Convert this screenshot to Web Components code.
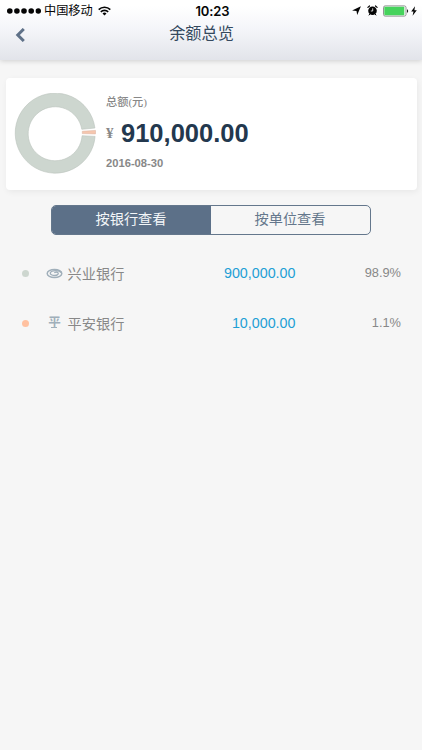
<!DOCTYPE html>
<html lang="zh-CN">
<head>
<meta charset="utf-8">
<meta name="viewport" content="width=device-width, initial-scale=1">
<title>余额总览</title>
<style>
  html, body {
    margin: 0;
    height: 100%;
    background: #f6f6f6;
    overflow: hidden;
  }

  body {
    font-family: "Liberation Sans", "Noto Sans CJK SC", sans-serif;
    color: #888;
  }
</style>
</head>
<body>
<balance-page></balance-page>

<script>
// ─── Status bar ─────────────────────────────────────────────────────────────
class StatusBar extends HTMLElement {
  constructor() {
    super();
    this.attachShadow({ mode: 'open' });
  }

  connectedCallback() {
    this.shadowRoot.innerHTML = `
      <style>
        :host {
          display: grid;
          grid-template-columns: 1fr auto 1fr;
          align-items: center;
          box-sizing: border-box;
          height: 21px;
          padding: 0 5px 0 7px;
          color: #050505;
          font-size: 12px;
          line-height: 20px;
        }

        svg { display: block; }
        .left, .right { display: flex; align-items: center; }
        .carrier { margin: 0 5px 0 3px; font-size: 12.2px; }
        .time {
          padding-left: 1px;
          font: 600 13px/20px Inter, sans-serif;
          letter-spacing: -0.1px;
        }
        .right { justify-content: flex-end; }
        .alarm { margin: 0 5px 0 6px; }
        .bolt { margin-left: 2px; }
      </style>

      <div class="left">
        <svg width="34" height="8" viewBox="0 0 34 8" fill="currentColor">
          <circle cx="2.8" cy="4" r="2.8"/><circle cx="9.9" cy="4" r="2.8"/>
          <circle cx="17" cy="4" r="2.8"/><circle cx="24.2" cy="4" r="2.8"/>
          <circle cx="31.3" cy="4" r="2.7"/>
        </svg>
        <span class="carrier">${this.getAttribute('carrier')}</span>
        <svg width="13" height="10" viewBox="0 0 13 10" fill="none" stroke="currentColor" stroke-width="1.6">
          <path d="M.7 3.6a8.3 8.3 0 0 1 11.6 0M2.8 5.9a5.3 5.3 0 0 1 7.4 0"/>
          <path d="M4.5 7.4a2.9 2.9 0 0 1 4 0L6.5 9.6z" fill="currentColor" stroke="none"/>
        </svg>
      </div>
      <span class="time">${this.getAttribute('time')}</span>
      <div class="right">
        <svg width="9" height="9" viewBox="0 0 9 9" fill="currentColor"><path d="M8.9.2 5.2 8.900 4.500 4.900.1 4.400z"/></svg>
        <svg class="alarm" width="11" height="11" viewBox="0 0 11 11">
          <g fill="none" stroke="currentColor" stroke-linecap="round">
            <path d="M.9 2.4 2.5 1M10.1 2.4 8.5 1" stroke-width="1.2"/>
            <path d="m2.7 9.2-.6.8M8.3 9.2l.6.8"/>
          </g>
          <circle cx="5.5" cy="5.7" r="4.3" fill="currentColor"/>
          <path d="M5.7 3.3V6H3.8" fill="none" stroke="#fff" stroke-width=".8"/>
        </svg>
        <svg width="26" height="12" viewBox="0 0 26 12">
          <rect x=".5" y=".9" width="22.5" height="10.2" rx="1.7" fill="#fff" stroke="#777" stroke-width=".8"/>
          <rect x="1.3" y="1.7" width="20" height="8.6" rx=".8" fill="#46d35c"/>
          <path d="M24 4.200c1.500.3 1.500 3.300 0 3.600z" fill="#222"/>
        </svg>
        <svg class="bolt" width="6" height="10" viewBox="0 0 6 10" fill="currentColor"><path d="M4 .2.2 5.5h2.300L1.600 9.800 5.800 4.200H3.400z"/></svg>
      </div>
    `;
  }
}

// ─── Navigation bar with back chevron ───────────────────────────────────────
class NavBar extends HTMLElement {
  constructor() {
    super();
    this.attachShadow({ mode: 'open' });
    this.shadowRoot.innerHTML = `
      <style>
        :host {
          display: grid;
          grid-template-columns: 50px 1fr 70px;
          height: 39px;
          color: #34495e;
        }

        button {
          display: flex;
          padding: 7px 0 0 15px;
          border: 0;
          background: none;
        }

        h1 {
          margin: 0;
          padding-left: 1px;
          font-size: 16.2px;
          font-weight: 400;
          line-height: 24px;
          text-align: center;
        }
      </style>

      <button aria-label="返回">
        <svg width="10" height="14" viewBox="0 0 10 14" fill="none" stroke="#5f7188" stroke-width="3"><path d="M8.8 1 2.8 7l6 6"/></svg>
      </button>
      <h1><slot></slot></h1>
    `;
  }
}

// ─── Donut chart: one wide ring segment and one small detached slice ────────
class ShareDonut extends HTMLElement {
  constructor() {
    super();
    this.attachShadow({ mode: 'open' });
    this.shadowRoot.innerHTML = `
      <style>
        :host { display: block; width: 82px; height: 82px; }
        svg { display: block; }
      </style>

      <svg width="82" height="82" viewBox="0 0 82 82" stroke-width=".6">
        <path d="M80.9 35A40 40 0 1 0 81.1 43.400L68.100 42.700A27 27 0 1 1 67.800 36.300Z" fill="#cdd6cf" stroke="#bac2bc"/>
        <path d="M68.300 38.300 81.500 37.400v3.500L68.300 40.600z" fill="#f6c6ae" stroke="#dfb7a5"/>
      </svg>
    `;
  }
}

// ─── Total card ─────────────────────────────────────────────────────────────
class TotalCard extends HTMLElement {
  constructor() {
    super();
    this.attachShadow({ mode: 'open' });
  }

  connectedCallback() {
    this.shadowRoot.innerHTML = `
      <style>
        :host {
          display: flex;
          box-sizing: border-box;
          height: 112px;
          margin: 0 5px 0 6px;
          padding: 15px 8px 0;
          border-radius: 4px;
          background: #fff;
          box-shadow: 1px 2px 6px rgba(0, 0, 0, .06);
        }

        .info { padding-left: 10px; }
        p { margin: 0; }
        .label {
          font: 500 11.2px/19px "Liberation Serif", "Noto Sans CJK SC", serif;
        }
        .amount {
          display: flex;
          align-items: center;
          height: 42px;
          color: #23384e;
          font-size: 25.5px;
          font-weight: 700;
        }
        .currency {
          width: 15px;
          color: #888;
          font: 700 15px/20px "Liberation Serif", serif;
        }
        .date {
          font-size: 11.2px;
          font-weight: 700;
          line-height: 18px;
        }
      </style>

      <share-donut></share-donut>
      <div class="info">
        <p class="label">总额(元)</p>
        <p class="amount"><span class="currency">¥</span><span>${this.getAttribute('amount')}</span></p>
        <p class="date">${this.getAttribute('date')}</p>
      </div>
    `;
  }
}

// ─── Two-way segmented switch ───────────────────────────────────────────────
class ViewSwitch extends HTMLElement {
  constructor() {
    super();
    this.attachShadow({ mode: 'open' });
    this.shadowRoot.innerHTML = `
      <style>
        :host {
          display: flex;
          box-sizing: border-box;
          width: 320px;
          height: 30px;
          margin: 15px 0 0 51px;
          border: 1px solid #64778c;
          border-radius: 5px;
          overflow: hidden;
        }

        button {
          flex: 1;
          padding: 0 1px 2px 0;
          border: 0;
          background: none;
          color: #64778c;
          font: inherit;
          font-size: 14.2px;
          line-height: 26px;
        }

        button.active { background: #5c7088; color: #f3f6f9; }
      </style>

      <button class="active"><slot name="first"></slot></button>
      <button><slot name="second"></slot></button>
    `;
    this.shadowRoot.querySelectorAll('button').forEach((button, index, buttons) => {
      button.addEventListener('click', () => {
        buttons = this.shadowRoot.querySelectorAll('button');
        buttons.forEach((el) => el.classList.toggle('active', el === button));
      });
    });
  }
}

// ─── One bank row; the default slot takes the bank's logo ───────────────────
class BankRow extends HTMLElement {
  constructor() {
    super();
    this.attachShadow({ mode: 'open' });
  }

  connectedCallback() {
    this.shadowRoot.innerHTML = `
      <style>
        :host {
          display: grid;
          grid-template-columns: 24px 20px 88px 1fr 105px;
          align-items: center;
          height: 50px;
          padding: 0 21px 0 22px;
          font-size: 14.2px;
        }

        .dot {
          width: 7px;
          height: 7px;
          border-radius: 50%;
          background: var(--dot-color, #ccc);
        }
        .logo { display: flex; justify-content: center; width: 17px; }
        .name { padding: 0 0 1px 1.6px; }
        .amount { padding-right: .5px; color: #1e9fd5; font-size: 14.3px; text-align: right; }
        .share { padding-bottom: 1px; font-size: 12.8px; text-align: right; }
      </style>

      <span class="dot"></span>
      <span class="logo"><slot></slot></span>
      <span class="name">${this.getAttribute('name')}</span>
      <span class="amount">${this.getAttribute('amount')}</span>
      <span class="share">${this.getAttribute('share')}</span>
    `;
  }
}

// ─── Page ───────────────────────────────────────────────────────────────────
class BalancePage extends HTMLElement {
  constructor() {
    super();
    this.attachShadow({ mode: 'open' });
    this.shadowRoot.innerHTML = `
      <style>
        :host { display: block; height: 100%; background: #f6f6f6; }

        header {
          height: 60px;
          background: linear-gradient(#fff 10%, #f4f5f9 50%, #e2e4ea);
          box-shadow: 0 1px 5px rgba(0, 0, 0, .16);
        }

        main { padding-top: 18px; }
        .banks { padding-top: 13px; }
        .cib { display: block; }
        .pingan {
          height: 10px;
          color: #a0afba;
          font-size: 12.5px;
          font-weight: 700;
          line-height: 10px;
          background: linear-gradient(#a0afba, #a0afba) 50% 100% / 6px 1px no-repeat;
        }
      </style>

      <header>
        <status-bar carrier="中国移动" time="10:23"></status-bar>
        <nav-bar>余额总览</nav-bar>
      </header>
      <main>
        <total-card amount="910,000.00" date="2016-08-30"></total-card>
        <view-switch>
          <span slot="first">按银行查看</span>
          <span slot="second">按单位查看</span>
        </view-switch>
        <div class="banks">
          <bank-row name="兴业银行" amount="900,000.00" share="98.9%" style="--dot-color: #cdd6cf">
            <svg class="cib" width="17" height="11" viewBox="0 0 17 11" fill="none" stroke="#a0afba">
              <ellipse cx="8.5" cy="5.5" rx="7.3" ry="4.1" stroke-width="1.5"/>
              <path d="M15.200 4.700C13.500 2 5.500 1.900 4.300 4.900c-.6 2.700 5.700 3.500 7.700 1.300 1.200-1.700-2-2.600-3.700-1.400" stroke-width="1.3"/>
            </svg>
          </bank-row>
          <bank-row name="平安银行" amount="10,000.00" share="1.1%" style="--dot-color: #ffc1a0">
            <span class="pingan">平</span>
          </bank-row>
        </div>
      </main>
    `;
  }
}

customElements.define('status-bar', StatusBar);
customElements.define('nav-bar', NavBar);
customElements.define('share-donut', ShareDonut);
customElements.define('total-card', TotalCard);
customElements.define('view-switch', ViewSwitch);
customElements.define('bank-row', BankRow);
customElements.define('balance-page', BalancePage);
</script>
</body>
</html>
